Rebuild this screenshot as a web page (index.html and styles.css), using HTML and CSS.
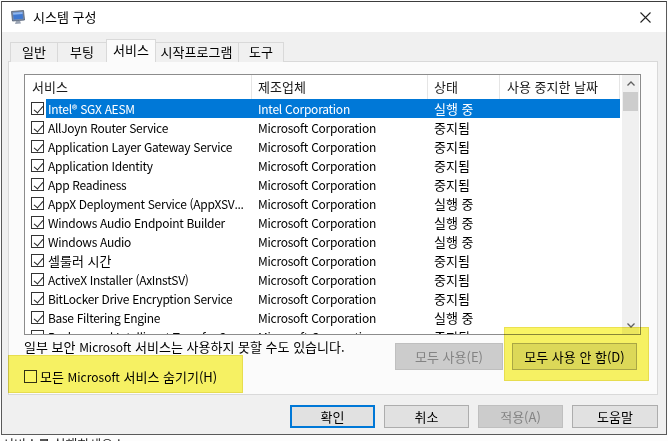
FILE: index.html
```html
<!DOCTYPE html>
<html lang="ko">
<head>
<meta charset="utf-8">
<title>시스템 구성</title>
<link rel="stylesheet" href="styles.css">
</head>
<body>
<div class="window">
  <div class="titlebar">
    <svg class="app-icon" width="16" height="16" viewBox="0 0 16 16">
      <path d="M1.5 2.5 L13.5 1.5 L14.5 11 L2.5 12 Z" fill="#7e8ea8" stroke="#4d5a70" stroke-width="0.8"/>
      <path d="M3 3.8 L12.4 3 L13.1 9.8 L3.7 10.6 Z" fill="#3f78d0"/>
      <path d="M3 3.8 L12.4 3 L12.6 5 L3.2 5.8 Z" fill="#8fb6ee"/>
      <path d="M6 12 L10 11.7 L11 14.5 L5 15 Z" fill="#9aa3b2"/>
    </svg>
    <span class="title">시스템 구성</span>
    <svg class="close" width="11" height="11" viewBox="0 0 11 11">
      <path d="M0.5 0.5 L10.5 10.5 M10.5 0.5 L0.5 10.5" stroke="#222" stroke-width="1.1"/>
    </svg>
  </div>
  <div class="content">
    <div class="tabs">
      <div class="tab t1">일반</div>
      <div class="tab t2">부팅</div>
      <div class="tab t3 active">서비스</div>
      <div class="tab t4">시작프로그램</div>
      <div class="tab t5">도구</div>
    </div>
    <div class="panel">
      <div class="list">
        <div class="list-main">
          <div class="header">
            <div class="hcell c1">서비스</div>
            <div class="hcell c2">제조업체</div>
            <div class="hcell c3">상태</div>
            <div class="hcell c4">사용 중지한 날짜</div>
          </div>
          <div class="rows">
            <div class="row selected"><span class="cb on"></span><span class="sel"><span class="cell n">Intel® SGX AESM</span><span class="cell m">Intel Corporation</span><span class="cell s">실행 중</span><span class="cell d"></span></span></div>
            <div class="row"><span class="cb on"></span><span class="sel"><span class="cell n">AllJoyn Router Service</span><span class="cell m">Microsoft Corporation</span><span class="cell s">중지됨</span><span class="cell d"></span></span></div>
            <div class="row"><span class="cb on"></span><span class="sel"><span class="cell n">Application Layer Gateway Service</span><span class="cell m">Microsoft Corporation</span><span class="cell s">중지됨</span><span class="cell d"></span></span></div>
            <div class="row"><span class="cb on"></span><span class="sel"><span class="cell n">Application Identity</span><span class="cell m">Microsoft Corporation</span><span class="cell s">중지됨</span><span class="cell d"></span></span></div>
            <div class="row"><span class="cb on"></span><span class="sel"><span class="cell n">App Readiness</span><span class="cell m">Microsoft Corporation</span><span class="cell s">중지됨</span><span class="cell d"></span></span></div>
            <div class="row"><span class="cb on"></span><span class="sel"><span class="cell n">AppX Deployment Service (AppXSV...</span><span class="cell m">Microsoft Corporation</span><span class="cell s">실행 중</span><span class="cell d"></span></span></div>
            <div class="row"><span class="cb on"></span><span class="sel"><span class="cell n">Windows Audio Endpoint Builder</span><span class="cell m">Microsoft Corporation</span><span class="cell s">실행 중</span><span class="cell d"></span></span></div>
            <div class="row"><span class="cb on"></span><span class="sel"><span class="cell n">Windows Audio</span><span class="cell m">Microsoft Corporation</span><span class="cell s">실행 중</span><span class="cell d"></span></span></div>
            <div class="row"><span class="cb on"></span><span class="sel"><span class="cell n ko">셀룰러 시간</span><span class="cell m">Microsoft Corporation</span><span class="cell s">중지됨</span><span class="cell d"></span></span></div>
            <div class="row"><span class="cb on"></span><span class="sel"><span class="cell n">ActiveX Installer (AxInstSV)</span><span class="cell m">Microsoft Corporation</span><span class="cell s">중지됨</span><span class="cell d"></span></span></div>
            <div class="row"><span class="cb on"></span><span class="sel"><span class="cell n">BitLocker Drive Encryption Service</span><span class="cell m">Microsoft Corporation</span><span class="cell s">중지됨</span><span class="cell d"></span></span></div>
            <div class="row"><span class="cb on"></span><span class="sel"><span class="cell n">Base Filtering Engine</span><span class="cell m">Microsoft Corporation</span><span class="cell s">실행 중</span><span class="cell d"></span></span></div>
            <div class="row"><span class="cb on"></span><span class="sel"><span class="cell n">Background Intelligent Transfer Se...</span><span class="cell m">Microsoft Corporation</span><span class="cell s">중지됨</span><span class="cell d"></span></span></div>
          </div>
        </div>
        <div class="scrollbar">
          <div class="arrow up">
            <svg width="8" height="5" viewBox="0 0 8 5"><path d="M0.5 4.5 L4 1 L7.5 4.5" fill="none" stroke="#606060" stroke-width="1.3"/></svg>
          </div>
          <div class="thumb"></div>
          <div class="track"></div>
          <div class="arrow down">
            <svg width="8" height="5" viewBox="0 0 8 5"><path d="M0.5 0.5 L4 4 L7.5 0.5" fill="none" stroke="#606060" stroke-width="1.3"/></svg>
          </div>
        </div>
      </div>
      <div class="note-row">
        <div class="note">일부 보안 <span class="lat">Microsoft</span> 서비스는 사용하지 못할 수도 있습니다.</div>
        <div class="btn disabled w-enable">모두 사용(E)</div>
        <div class="btn w-disable">모두 사용 안 함(D)</div>
      </div>
      <div class="hide-row">
        <span class="cb"></span>
        <span class="hide-label">모든 <span class="lat">Microsoft</span> 서비스 숨기기(H)</span>
      </div>
    </div>
    <div class="footer">
      <div class="btn fbtn default">확인</div>
      <div class="btn fbtn">취소</div>
      <div class="btn fbtn disabled">적용(A)</div>
      <div class="btn fbtn help">도움말</div>
    </div>
  </div>
</div>
<div class="behind">서비스를 실행하세요 :</div>
<div class="hl hl-1"></div>
<div class="hl hl-2"></div>
</body>
</html>
```
FILE: styles.css
```css
* { box-sizing: border-box; }
html, body { margin: 0; padding: 0; }
body {
  width: 668px;
  height: 441px;
  overflow: hidden;
  position: relative;
  background: #fdfdfd;
  font-family: "Noto Sans CJK KR", "Liberation Sans", sans-serif;
  font-size: 13px;
  color: #000;
}
.lat { font-size: 12px; }
.window {
  margin: 1px 0 0 1px;
  width: 666px;
  height: 434px;
  border: 1px solid #5a5a5a;
  border-top-color: #3c3c3c;
  background: #f0f0f0;
  display: flex;
  flex-direction: column;
}
.titlebar {
  height: 30px;
  background: #fff;
  display: flex;
  align-items: center;
  padding-left: 8px;
  flex: none;
}
.app-icon { flex: none; }
.title { margin-left: 7px; line-height: 16px; }
.close { margin-left: auto; margin-right: 15px; }
.content {
  padding: 7px 8px 0 6px;
  flex: 1;
  display: flex;
  flex-direction: column;
}
.tabs {
  display: flex;
  align-items: flex-end;
  height: 23px;
  padding-left: 2px;
  position: relative;
  z-index: 2;
}
.tab {
  height: 20px;
  border: 1px solid #d9d9d9;
  border-bottom: none;
  border-right: none;
  background: #f0f0f0;
  line-height: 18px;
  text-align: center;
  white-space: nowrap;
}
.t1 { width: 47px; }
.t2 { width: 49px; }
.t3 { width: 50px; }
.t4 { width: 83px; }
.t5 { width: 46px; border-right: 1px solid #d9d9d9; }
.tab.active {
  height: 23px;
  background: #fbfbfb;
  border-right: 1px solid #d9d9d9;
  line-height: 19px;
  margin-right: -1px;
  position: relative;
}
.tab.active + .tab { border-left: none; }
.panel {
  margin-top: -1px;
  height: 334px;
  border: 1px solid #d9d9d9;
  background: #fbfbfb;
  padding: 12px 16px 0 15px;
  display: flex;
  flex-direction: column;
}
.list {
  height: 261px;
  border: 1px solid #8c8c8c;
  background: #fff;
  display: flex;
  flex: none;
}
.list-main {
  width: 597px;
  display: flex;
  flex-direction: column;
  overflow: hidden;
}
.header {
  height: 24px;
  display: flex;
  flex: none;
}
.hcell {
  height: 24px;
  line-height: 24px;
  border-right: 1px solid #e5e5e5;
  color: #1a1a1a;
  white-space: nowrap;
}
.hcell.c1 { width: 227px; padding-left: 7px; }
.hcell.c2 { width: 176px; padding-left: 6px; }
.hcell.c3 { width: 72px; padding-left: 6px; }
.hcell.c4 { width: 120px; padding-left: 7px; }
.rows { flex: 1; overflow: hidden; }
.row {
  height: 19px;
  display: flex;
  align-items: center;
}
.cb {
  width: 13px;
  height: 13px;
  border: 1px solid #333;
  background: #fff;
  position: relative;
  flex: none;
}
.row .cb { margin-left: 6px; margin-right: 2px; }
.cb.on::after {
  content: "";
  position: absolute;
  left: 3.5px;
  top: 0.5px;
  width: 4px;
  height: 8px;
  border: solid #222;
  border-width: 0 1.3px 1.3px 0;
  transform: rotate(40deg);
}
.sel {
  display: flex;
  height: 19px;
  align-items: center;
  width: 574px;
}
.row.selected .sel { background: #0078d7; color: #fff; }
.cell {
  white-space: nowrap;
  overflow: hidden;
  line-height: 19px;
}
.cell.n { width: 206px; padding-left: 2px; font-size: 12px; letter-spacing: -0.3px; }
.cell.n.ko { font-size: 13px; letter-spacing: 0; }
.cell.m { width: 176px; padding-left: 6px; font-size: 12px; letter-spacing: -0.25px; }
.cell.s { width: 72px; padding-left: 6px; }
.cell.d { width: 120px; }
.scrollbar {
  width: 17px;
  background: #f0f0f0;
  display: flex;
  flex-direction: column;
  flex: none;
}
.arrow {
  height: 17px;
  display: flex;
  align-items: center;
  justify-content: center;
  flex: none;
}
.thumb {
  margin: 0 1px;
  height: 19px;
  background: #cdcdcd;
  flex: none;
}
.track { flex: 1; }
.note-row {
  display: flex;
  margin-top: 8px;
  height: 27px;
  flex: none;
}
.note {
  flex: 1;
  line-height: 16px;
  margin-top: -4px;
  white-space: nowrap;
}
.btn {
  height: 27px;
  border: 1px solid #adadad;
  background: #e1e1e1;
  display: flex;
  align-items: center;
  justify-content: center;
  white-space: nowrap;
  flex: none;
}
.btn.disabled {
  background: #cccccc;
  border-color: #bfbfbf;
  color: #838383;
}
.w-enable { width: 108px; }
.w-disable { width: 125px; margin-left: 9px; margin-right: 4px; }
.hide-row {
  display: flex;
  align-items: center;
  height: 13px;
  flex: none;
}
.hide-label { margin-left: 3px; line-height: 16px; white-space: nowrap; }
.footer {
  display: flex;
  justify-content: flex-end;
  gap: 9px;
  padding-top: 10px;
}
.fbtn { width: 85px; height: 23px; }
.fbtn.help { width: 86px; }
.fbtn.default { border: 2px solid #0078d7; }
.behind {
  height: 6px;
  overflow: hidden;
  padding-left: 2px;
  font-size: 13px;
  line-height: 18px;
  color: #222;
}
.hl {
  position: absolute;
  background: rgb(250, 245, 100);
  mix-blend-mode: multiply;
  border: 1px solid rgb(235, 225, 80);
}
.hl-1 { left: 504px; top: 327px; width: 145px; height: 54px; }
.hl-2 { left: 8px; top: 355px; width: 235px; height: 38px; }
```
